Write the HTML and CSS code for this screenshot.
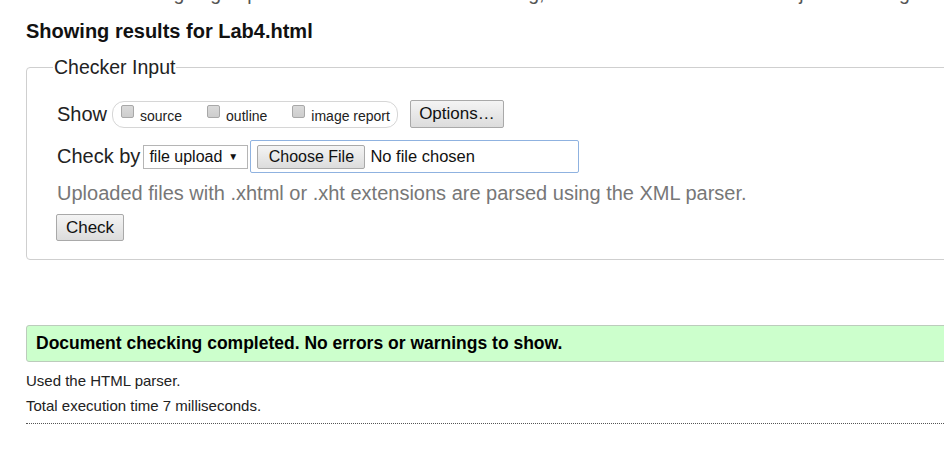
FILE: index.html
```html
<!DOCTYPE html>
<html>
<head>
<meta charset="utf-8">
<link rel="stylesheet" href="styles.css">
</head>
<body>
<div class="page">
  <p class="about">This tool is an ongoing experiment in better HTML checking, and its behavior remains subject to change</p>
  <h2 class="title">Showing results for Lab4.html</h2>
  <fieldset class="checker">
    <legend class="legend">Checker Input</legend>
    <div class="row row-show">
      <span class="label">Show</span>
      <span class="opts">
        <label class="opt"><input type="checkbox" class="cb"><span>source</span></label>
        <label class="opt"><input type="checkbox" class="cb"><span>outline</span></label>
        <label class="opt"><input type="checkbox" class="cb"><span>image report</span></label>
      </span>
      <button class="btn btn-options">Options…</button>
    </div>
    <div class="row row-by">
      <span class="label">Check by</span>
      <span class="select">file upload <span class="arrow">▼</span></span>
      <span class="file">
        <button class="btn btn-file">Choose File</button>
        <span class="nofile">No file chosen</span>
      </span>
    </div>
    <p class="note">Uploaded files with .xhtml or .xht extensions are parsed using the XML parser.</p>
    <button class="btn btn-check">Check</button>
  </fieldset>
  <p class="success">Document checking completed. No errors or warnings to show.</p>
  <p class="stat stat-first">Used the HTML parser.</p>
  <p class="stat">Total execution time 7 milliseconds.</p>
  <div class="rule"></div>
</div>
</body>
</html>
```
FILE: styles.css
```css
html, body {
  margin: 0;
  padding: 0;
  background: #fff;
  overflow: hidden;
}
body {
  font-family: "Liberation Sans", Arial, sans-serif;
  color: #222;
}
.page {
  width: 1000px;
  padding-left: 26px;
}
.about {
  margin: -18px 0 0 0;
  font-size: 19.5px;
  line-height: 22px;
  color: #555;
  white-space: nowrap;
}
.title {
  margin: 15px 0 0 0;
  font-size: 20px;
  line-height: 24px;
  font-weight: bold;
  color: #111;
}
.checker {
  margin: 13px 0 0 0;
  padding: 0 0 18px 30px;
  border: 1px solid #cfcfcf;
  border-radius: 4px;
}
.legend {
  margin-left: -4px;
  padding: 0 1px;
  font-size: 19.5px;
  line-height: 22px;
  color: #222;
}
.row {
  display: flex;
  align-items: center;
}
.row-show {
  margin-top: 22px;
  height: 28px;
}
.label {
  font-size: 20px;
  color: #222;
}
.opts {
  display: flex;
  align-items: center;
  margin-left: 5px;
  height: 25px;
  padding: 0 7px 0 8px;
  border: 1px solid #d6d6d6;
  border-radius: 12px;
}
.opt {
  display: flex;
  align-items: center;
  margin-right: 25px;
  font-size: 14px;
  color: #222;
}
.opt:last-child {
  margin-right: 0;
}
.opt span {
  margin-top: 3px;
}
.cb {
  appearance: none;
  -webkit-appearance: none;
  width: 13px;
  height: 13px;
  margin: -6px 6px 0 0;
  border: 1px solid #a8a8a8;
  border-radius: 2px;
  background: linear-gradient(#dadada, #cdcdcd);
}
.btn {
  font-family: "Liberation Sans", Arial, sans-serif;
  font-size: 17px;
  color: #111;
  border: 1px solid #a9a9a9;
  border-radius: 2px;
  background: linear-gradient(#f4f4f4, #dcdcdc);
  padding: 0;
}
.btn-options {
  margin-left: 12px;
  width: 94px;
  height: 28px;
}
.row-by {
  margin-top: 12px;
}
.select {
  display: inline-flex;
  align-items: center;
  margin-left: 3px;
  width: 105px;
  height: 24px;
  box-sizing: border-box;
  padding-left: 5px;
  border: 1px solid #b5b5b5;
  font-size: 16px;
  color: #111;
}
.arrow {
  font-size: 10px;
  margin-left: 6px;
}
.file {
  display: inline-flex;
  align-items: center;
  margin-left: 2px;
  width: 329px;
  height: 33px;
  box-sizing: border-box;
  padding-left: 6px;
  border: 1px solid #8fb2e0;
  border-radius: 2px;
}
.btn-file {
  width: 108px;
  height: 24px;
  font-size: 16px;
}
.nofile {
  margin-left: 5px;
  font-size: 16.5px;
  color: #111;
}
.note {
  margin: 8px 0 0 0;
  font-size: 20px;
  line-height: 24px;
  color: #777;
}
.btn-check {
  display: block;
  margin: 9px 0 0 -1px;
  width: 68px;
  height: 27px;
}
.success {
  margin: 65px 0 0 0;
  height: 37px;
  box-sizing: border-box;
  padding: 0 0 0 9px;
  line-height: 35px;
  font-size: 17.5px;
  font-weight: bold;
  color: #000;
  background: #ccffcc;
  border: 1px solid #bcccbc;
  border-radius: 3px;
}
.stat {
  margin: 0;
  font-size: 15px;
  line-height: 25px;
  color: #222;
}
.stat-first {
  margin-top: 6px;
}
.rule {
  margin-top: 5px;
  border-top: 1px dotted #555;
}
```
